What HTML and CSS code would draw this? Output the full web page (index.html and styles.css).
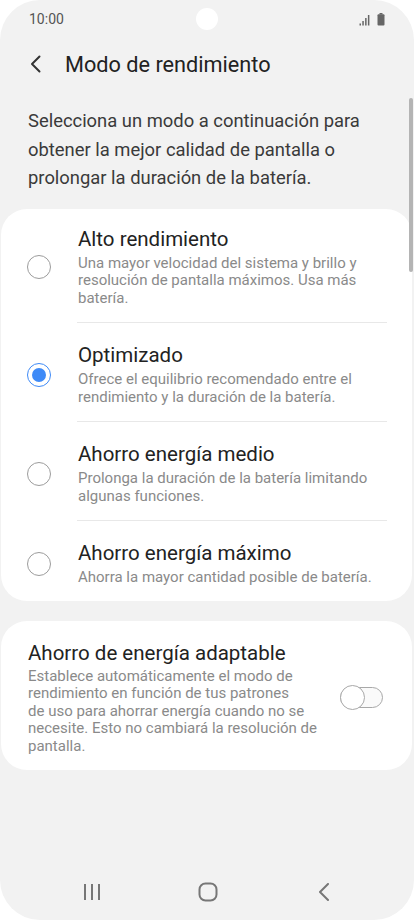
FILE: index.html
```html
<!DOCTYPE html>
<html lang="es">
<head>
    <meta charset="UTF-8">
    <meta name="viewport" content="width=device-width, initial-scale=1.0">
    <title>Modo de rendimiento</title>
    <link rel="stylesheet" href="styles.css">
</head>
<body>

<div class="phone">

    <div class="status-bar">
        <span class="time">10:00</span>
        <span class="camera"></span>
        <span class="status-icons">
            <svg width="12" height="12" viewBox="0 0 12 12">
                <rect x="0.5" y="9.5" width="1.5" height="2" fill="#666"/>
                <rect x="3.3" y="7" width="1.5" height="4.5" fill="#666"/>
                <rect x="6.1" y="4" width="1.5" height="7.5" fill="#666"/>
                <rect x="8.9" y="1" width="1.5" height="10.5" fill="#666"/>
            </svg>
            <svg width="8" height="13" viewBox="0 0 8 13">
                <rect x="2.5" y="0" width="3" height="1.5" fill="#666"/>
                <rect x="0.5" y="1.3" width="7" height="11.2" rx="1" fill="#666"/>
            </svg>
        </span>
    </div>

    <div class="header">
        <svg class="back" width="14" height="18" viewBox="0 0 14 18">
            <path d="M10.5 1.5 L3 9 L10.5 16.5" fill="none" stroke="#333" stroke-width="2" stroke-linecap="round" stroke-linejoin="round"/>
        </svg>
        <h1>Modo de rendimiento</h1>
    </div>

    <p class="intro">Selecciona un modo a continuación para obtener la mejor calidad de pantalla o prolongar la duración de la batería.</p>

    <div class="card modes">
        <div class="mode">
            <span class="radio"></span>
            <div class="mode-text">
                <div class="title">Alto rendimiento</div>
                <div class="desc">Una mayor velocidad del sistema y brillo y resolución de pantalla máximos. Usa más batería.</div>
            </div>
        </div>
        <div class="mode">
            <span class="radio checked"></span>
            <div class="mode-text">
                <div class="title">Optimizado</div>
                <div class="desc">Ofrece el equilibrio recomendado entre el rendimiento y la duración de la batería.</div>
            </div>
        </div>
        <div class="mode">
            <span class="radio"></span>
            <div class="mode-text">
                <div class="title">Ahorro energía medio</div>
                <div class="desc">Prolonga la duración de la batería limitando algunas funciones.</div>
            </div>
        </div>
        <div class="mode">
            <span class="radio"></span>
            <div class="mode-text">
                <div class="title">Ahorro energía máximo</div>
                <div class="desc">Ahorra la mayor cantidad posible de batería.</div>
            </div>
        </div>
    </div>

    <div class="card adaptive">
        <div class="adaptive-text">
            <div class="title">Ahorro de energía adaptable</div>
            <div class="desc">Establece automáticamente el modo de<br>rendimiento en función de tus patrones<br>de uso para ahorrar energía cuando no se<br>necesite. Esto no cambiará la resolución de<br>pantalla.</div>
        </div>
        <span class="toggle">
            <span class="track"></span>
            <span class="knob"></span>
        </span>
    </div>

    <div class="scrollbar"></div>

    <div class="nav-bar">
        <svg width="20" height="18" viewBox="0 0 20 18">
            <path d="M3 1 V17 M10 1 V17 M17 1 V17" stroke="#777" stroke-width="2"/>
        </svg>
        <svg width="20" height="20" viewBox="0 0 20 20">
            <rect x="1.5" y="1.5" width="17" height="17" rx="6" fill="none" stroke="#777" stroke-width="2"/>
        </svg>
        <svg width="20" height="18" viewBox="0 0 20 18">
            <path d="M14 1 L6 9 L14 17" fill="none" stroke="#777" stroke-width="2" stroke-linecap="round" stroke-linejoin="round"/>
        </svg>
    </div>

</div>

</body>
</html>
```

FILE: styles.css
```css
body {
    margin: 0;
    background-color: #fff;
    font-family: Roboto, "Noto Sans", Arial, sans-serif;
}

.phone {
    position: relative;
    width: 414px;
    height: 920px;
    background-color: #f2f2f2;
    border-radius: 40px;
    overflow: hidden;
    display: flex;
    flex-direction: column;
}

.status-bar {
    height: 38px;
    display: flex;
    align-items: center;
    padding: 0 29px;
    box-sizing: border-box;
}

.time {
    font-size: 14px;
    color: #555;
}

.camera {
    position: absolute;
    top: 8px;
    left: 196px;
    width: 22px;
    height: 22px;
    border-radius: 50%;
    background-color: #fff;
}

.status-icons {
    margin-left: auto;
    display: flex;
    align-items: flex-end;
    gap: 6px;
}

.header {
    height: 52px;
    display: flex;
    align-items: center;
    padding-left: 29px;
}

.header .back {
    margin-right: 22px;
}

.header h1 {
    margin: 0;
    font-size: 21.7px;
    font-weight: 400;
    color: #222;
}

.intro {
    margin: 17px 30px 16px 28px;
    font-size: 18.4px;
    line-height: 28.5px;
    color: #3a3a3a;
}

.card {
    background-color: #fff;
    border-radius: 26px;
    margin: 0 2px 0 1px;
}

.title {
    font-size: 20.5px;
    line-height: 24px;
    color: #222;
}

.desc {
    margin-top: 4px;
    font-size: 15px;
    line-height: 17.5px;
    color: #8a8a8a;
}

.modes {
    padding: 0 25px 0 26px;
}

.mode {
    display: flex;
    align-items: center;
    padding: 20px 0 15px;
}

.mode:first-child {
    padding-top: 18px;
}

.mode:last-child {
    padding-bottom: 14px;
}

.mode:not(:last-child) {
    border-bottom: 1px solid #e8e8e8;
    border-image: linear-gradient(to right, transparent 51px, #e8e8e8 51px) 1;
}

.mode-text {
    flex: 1;
    margin-left: 27px;
}

.radio {
    width: 24px;
    height: 24px;
    border: 1.5px solid #9c9c9c;
    border-radius: 50%;
    box-sizing: border-box;
    flex-shrink: 0;
    display: flex;
    align-items: center;
    justify-content: center;
}

.radio.checked {
    border-color: #3e8af7;
}

.radio.checked::after {
    content: "";
    width: 14px;
    height: 14px;
    border-radius: 50%;
    background-color: #3e8af7;
}

.adaptive {
    margin-top: 20px;
    display: flex;
    align-items: center;
    padding: 20px 29px 15px 27px;
}

.adaptive-text {
    flex: 1;
}

.adaptive .desc {
    margin-top: 3px;
}

.toggle {
    position: relative;
    margin-left: auto;
    width: 43px;
    height: 25px;
    flex-shrink: 0;
    display: flex;
    align-items: center;
}

.track {
    width: 100%;
    height: 21px;
    border: 1.5px solid #a8a8a8;
    border-radius: 11px;
    box-sizing: border-box;
    background-color: #fafafa;
}

.knob {
    position: absolute;
    left: 0;
    top: 0;
    width: 25px;
    height: 25px;
    border: 1.5px solid #a8a8a8;
    border-radius: 50%;
    box-sizing: border-box;
    background-color: #fff;
}

.scrollbar {
    position: absolute;
    top: 98px;
    right: 1px;
    width: 4px;
    height: 174px;
    border-radius: 2px;
    background-color: #b4b4b4;
}

.nav-bar {
    margin-top: auto;
    height: 56px;
    display: flex;
    align-items: center;
    justify-content: center;
    gap: 96px;
    padding-left: 1px;
}
```
